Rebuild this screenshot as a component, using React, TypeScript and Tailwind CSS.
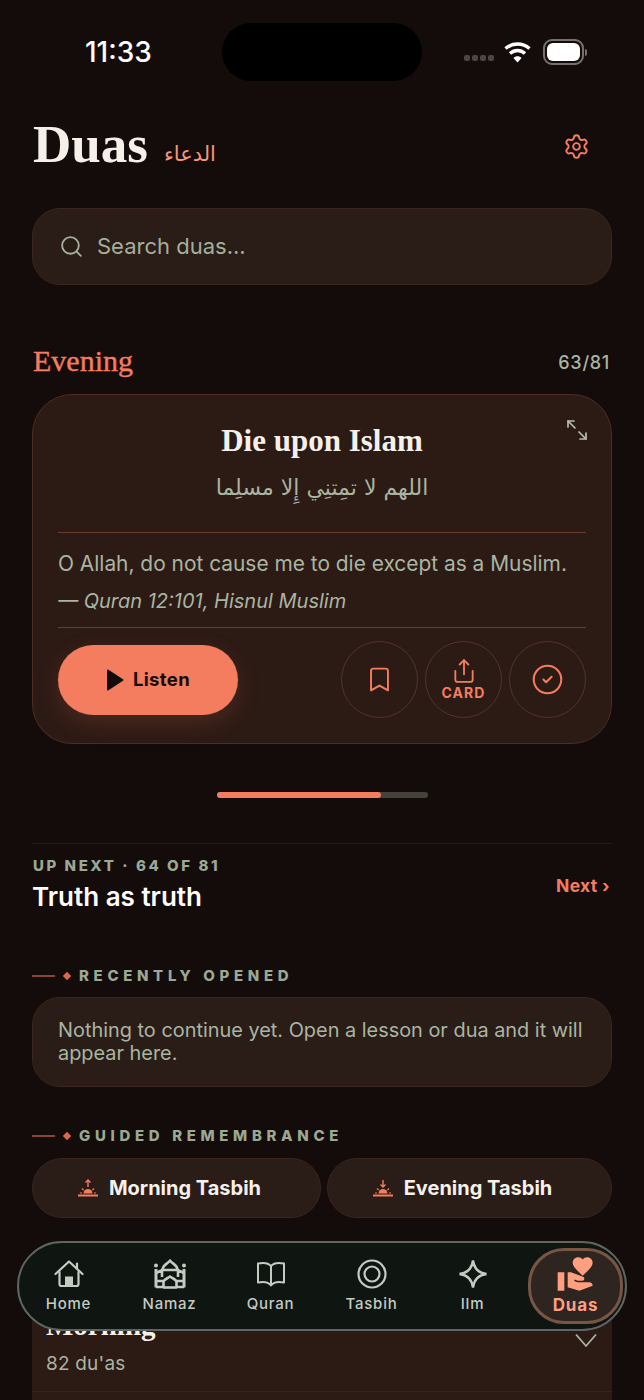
import { Bookmark, CircleCheck, Maximize2, Search, Settings, Share } from "lucide-react";
import { MdVolunteerActivism } from "react-icons/md";

const sans = "font-['Inter','Noto_Sans',sans-serif]";
const serif = "font-['Liberation_Serif','DejaVu_Serif',serif]";

function SectionLabel({ text }: { text: string }) {
  return (
    <div className="flex h-5 items-center">
      <div className="h-[2px] w-[23px] bg-[#8a4535]" />
      <div className="ml-[9px] h-[6px] w-[6px] rotate-45 bg-[#d9674c]" />
      <span className="ml-[9px] text-[15px] font-extrabold tracking-[0.31em] text-[#9aa894]">{text}</span>
    </div>
  );
}

function SunIcon({ down }: { down?: boolean }) {
  return (
    <svg width="20" height="18" viewBox="0 0 20 18" fill="#f47c5f">
      <rect x="0" y="15.500" width="20" height="2" />
      <path d="M5.500 14.500a4.500 4.500 0 0 1 9 0z" />
      <path d="M10 1v7M7.500 3.500 10 1l2.500 2.500" stroke="#f47c5f" strokeWidth="1.400" fill="none" transform={down ? "rotate(180 10 4.500)" : undefined} />
      <path d="M2 14h2M16 14h2M4 9.500l1.500 1.500M16 9.500 14.500 11" stroke="#f47c5f" strokeWidth="1.200" />
    </svg>
  );
}

function HomeIcon() {
  return (
    <svg width="30" height="28" viewBox="0 0 30 28" fill="none" stroke="#c3cbc3" strokeWidth="2.200" strokeLinejoin="round" strokeLinecap="round">
      <path d="M1.500 14 15 1.500 28.500 14" />
      <path d="M5.500 12v12a2 2 0 0 0 2 2h15a2 2 0 0 0 2-2V12" />
      <path d="M23 8V3.500" />
      <rect x="11" y="16.500" width="8" height="9.500" fill="#c3cbc3" stroke="none" />
    </svg>
  );
}

function MosqueIcon() {
  return (
    <svg width="34" height="30" viewBox="0 0 34 30" fill="none" stroke="#c3cbc3" strokeWidth="2.600" strokeLinejoin="round">
      <path d="M17 1.500c1.500 3 7.500 4 7.500 9.500h-15C9.500 5.500 15.500 4.500 17 1.500z" />
      <path d="M3 28.500V10M31 28.500V10" strokeWidth="3" />
      <circle cx="3" cy="6.500" r="2" fill="#c3cbc3" stroke="none" />
      <circle cx="31" cy="6.500" r="2" fill="#c3cbc3" stroke="none" />
      <path d="M3 14 9.500 11M31 14l-6.500-3M3 22h7M31 22h-7M9 11v7M25 11v7" />
      <path d="M3 28h7M24 28h7" />
      <path d="M10.500 28.500V23c0-2.500 4-3.500 6.500-5.500 2.500 2 6.500 3 6.500 5.500v5.500" />
      <path d="M10 28.500h14" />
    </svg>
  );
}

function BookIcon() {
  return (
    <svg width="30" height="26" viewBox="0 0 30 26" fill="none" stroke="#c3cbc3" strokeWidth="2" strokeLinejoin="round" strokeLinecap="round">
      <path d="M15 5C12.500 2 7 1.500 2 2.500v19C7 20.500 12.500 21 15 24.500c2.500-3.500 8-4 13-3v-19C23 1.500 17.500 2 15 5z" />
      <path d="M15 5v19" />
    </svg>
  );
}

function TasbihIcon() {
  return (
    <svg width="30" height="30" viewBox="0 0 30 30" fill="none" stroke="#c3cbc3" strokeWidth="2.200">
      <circle cx="15" cy="15" r="13.500" />
      <circle cx="15" cy="15" r="7.500" />
    </svg>
  );
}

function StarIcon() {
  return (
    <svg width="32" height="32" viewBox="0 0 32 32" fill="none" stroke="#c3cbc3" strokeWidth="2.400" strokeLinejoin="miter">
      <path d="M16 2.500 C17 10 21 15 29.500 16 C21 17 17 22 16 29.500 C15 22 11 17 2.500 16 C11 15 15 10 16 2.500z" />
    </svg>
  );
}

function NavItem({ label, children }: { label: string; children: React.ReactNode }) {
  return (
    <div className="flex w-[101px] flex-col items-center gap-[4px]">
      <div className="flex h-8 items-center justify-center">{children}</div>
      <span className="text-[15px] leading-5 font-medium tracking-[0.05em] text-[#c3cbc3]">{label}</span>
    </div>
  );
}

export default function App() {
  return (
    <div className={`relative h-[1400px] w-[644px] overflow-hidden bg-[#140c0a] ${sans}`}>
      {/* status bar */}
      <div className="flex h-[81px] items-end">
        <div className="flex h-[58px] w-full items-center">
          <span className="w-[222px] pl-[85px] text-[28px] font-medium text-white">11:33</span>
          <div className="h-[58px] w-[200px] rounded-[29px] bg-black" />
          <div className="flex flex-1 items-center justify-end pr-[57px]">
            <div className="mt-3 mr-[10px] flex gap-[2px]">
              <div className="h-[6px] w-[6px] rounded-[2px] bg-[#4a4644]" />
              <div className="h-[6px] w-[6px] rounded-[2px] bg-[#4a4644]" />
              <div className="h-[6px] w-[6px] rounded-[2px] bg-[#4a4644]" />
              <div className="h-[6px] w-[6px] rounded-[2px] bg-[#4a4644]" />
            </div>
            <svg width="27" height="24" viewBox="0 0 27 24" fill="none" stroke="#fff" strokeWidth="3.400">
              <path d="M1.500 8.500c7-6 17-6 24 0" />
              <path d="M6 13.500c4.500-4 10.500-4 15 0" />
              <path d="M13.500 22.500 9.500 18c2-2.200 6-2.200 8 0z" fill="#fff" stroke="none" />
            </svg>
            <div className="ml-[12px] flex items-center">
              <div className="h-[26px] w-[41px] rounded-[9px] border-2 border-[#77706d] p-[2px]">
                <div className="h-full w-full rounded-[6px] bg-white" />
              </div>
              <div className="ml-px h-[7px] w-[2px] rounded-r bg-[#77706d]" />
            </div>
          </div>
        </div>
      </div>

      <div className="px-8">
        {/* header */}
        <div className="mt-[33px] flex h-[64px] items-center justify-between">
          <div className="flex items-end">
            <h1 className={`${serif} mb-[4px] ml-px text-[53px] leading-[60px] font-bold text-[#f5f1ea]`}>Duas</h1>
            <span dir="rtl" className="mb-[8px] ml-[16px] font-['DejaVu_Sans',sans-serif] text-[21px] leading-8 text-[#f79679]">الدعاء</span>
          </div>
          <Settings size={27} strokeWidth={1.700} className="mr-[22px] text-[#f47c5f]" />
        </div>

        {/* search */}
        <div className="mt-[30px] flex h-[77px] items-center rounded-[28px] border border-[#3a261e] bg-[#2a1c17] pl-[26px]">
          <Search size={25} strokeWidth={1.800} className="text-[#a3b09c]" />
          <span className="ml-[13px] text-[22px] text-[#a3b09c]">Search duas...</span>
        </div>

        {/* current dua */}
        <div className="mt-[58px] flex h-[38px] items-center justify-between">
          <span className={`${serif} mb-[3px] ml-px text-[30px] text-[#f47c5f] [-webkit-text-stroke:0.4px_#f47c5f]`}>Evening</span>
          <span className="mr-[2px] text-[18px] font-medium tracking-[0.04em] text-[#a9b5a2]">63/81</span>
        </div>
        <div className="relative mt-[13px] h-[350px] rounded-[40px] border border-[#4d2d22] bg-[#2c1a14] px-[25px]">
          <Maximize2 size={24} strokeWidth={1.700} className="absolute top-[23px] right-[22px] rotate-90 text-[#b3bead]" />
          <div className={`${serif} mt-[27px] text-center text-[31px] leading-[38px] font-bold text-[#f5f1ea]`}>Die upon Islam</div>
          <div dir="rtl" className="mt-[6px] text-center font-['DejaVu_Sans',sans-serif] text-[22px] leading-[44px] text-[#a9b5a2]">اللهم لا تمِتنِي إِلا مسلِما</div>
          <div className="mt-[22px] border-t border-[#6a3a2c] pt-[17px]">
            <p className="text-[20.900px] leading-[28px] text-[#a9b5a2]">O Allah, do not cause me to die except as a Muslim.</p>
            <p className="mt-[9px] text-[20px] leading-[28px] italic text-[#a9b5a2]">— Quran 12:101, Hisnul Muslim</p>
          </div>
          <div className="mt-[12px] flex items-center justify-between border-t border-[#6a3a2c] pt-[13px]">
            <div className="flex h-[70px] w-[180px] items-center justify-center gap-[9px] rounded-[35px] bg-[#f47c5f] shadow-[0_8px_24px_rgba(244,124,95,0.16)]">
              <svg width="18" height="22" viewBox="0 0 18 22" fill="#140c0a">
                <path d="M1 1.500a1 1 0 0 1 1.500-.800l14.500 9.500a1 1 0 0 1 0 1.600L2.500 21.300A1 1 0 0 1 1 20.500z" />
              </svg>
              <span className="text-[18.500px] font-bold tracking-[0.02em] text-[#140c0a]">Listen</span>
            </div>
            <div className="flex gap-[7px]">
              <div className="flex h-[77px] w-[77px] items-center justify-center rounded-full border border-[#56332a]">
                <Bookmark size={29} strokeWidth={1.600} className="text-[#f47c5f]" />
              </div>
              <div className="flex h-[77px] w-[77px] flex-col items-center justify-center rounded-full border border-[#56332a]">
                <Share size={26} strokeWidth={1.700} className="text-[#f47c5f]" />
                <span className="mt-[1px] text-[14px] leading-4 font-bold tracking-[0.08em] text-[#f47c5f]">CARD</span>
              </div>
              <div className="flex h-[77px] w-[77px] items-center justify-center rounded-full border border-[#56332a]">
                <CircleCheck size={33} strokeWidth={1.500} className="text-[#f47c5f]" />
              </div>
            </div>
          </div>
        </div>

        {/* pager */}
        <div className="mx-auto mt-[48px] h-[6px] w-[211px] rounded-full bg-[#45423a]">
          <div className="h-full w-[164px] rounded-full bg-[#f47c5f]" />
        </div>

        {/* up next */}
        <div className="mt-[45px] flex items-center justify-between border-t border-[#241a16] pt-[12px]">
          <div>
            <div className="ml-px text-[15px] leading-5 font-extrabold tracking-[0.17em] text-[#9aa894]">UP NEXT · 64 OF 81</div>
            <div className="mt-[5px] text-[26px] leading-8 font-semibold text-white">Truth as truth</div>
          </div>
          <span className="mt-[4px] mr-[2px] text-[17.500px] font-bold tracking-[0.02em] text-[#f47c5f]">Next ›</span>
        </div>

        {/* recently opened */}
        <div className="mt-[53px]">
          <SectionLabel text="RECENTLY OPENED" />
        </div>
        <div className="mt-[11px] flex h-[90px] items-center rounded-[28px] border border-[#3a261e] bg-[#2a1c17] px-[25px]">
          <p className="text-[19.900px] leading-[23px] text-[#a9b5a2]">Nothing to continue yet. Open a lesson or dua and it will appear here.</p>
        </div>

        {/* guided */}
        <div className="mt-[39px]">
          <SectionLabel text="GUIDED REMEMBRANCE" />
        </div>
        <div className="mt-[12px] flex gap-[6px]">
          <div className="flex h-[60px] w-[289px] items-center justify-center gap-[11px] rounded-[30px] border border-[#3a261e] bg-[#2a1c17] pr-[14px]">
            <SunIcon />
            <span className="text-[20px] font-bold text-[#f5f1ea]">Morning Tasbih</span>
          </div>
          <div className="flex h-[60px] flex-1 items-center justify-center gap-[11px] rounded-[30px] border border-[#3a261e] bg-[#2a1c17] pr-[14px]">
            <SunIcon down />
            <span className="text-[20px] font-bold text-[#f5f1ea]">Evening Tasbih</span>
          </div>
        </div>

        {/* category list, mostly under the tab bar */}
        <div className="mt-[38px] h-[200px] bg-[#2c1a14]">
          <div className="flex h-[136px] items-end justify-between border-b border-[#3a2018] pr-[15px] pl-[14px]">
            <div>
              <div className={`${serif} text-[29px] leading-9 font-bold text-[#f5f1ea]`}>Morning</div>
              <div className="mt-[7px] mb-[13px] text-[19px] leading-7 tracking-[0.01em] text-[#a9b5a2]">82 du'as</div>
            </div>
            <svg width="22" height="15" viewBox="0 0 22 15" fill="none" stroke="#a9b5a2" strokeWidth="1.800" className="mb-[43px]">
              <path d="M1 1.500 11 13 21 1.500" />
            </svg>
          </div>
        </div>
      </div>

      {/* tab bar */}
      <div className="absolute top-[1241px] left-[17px] flex h-[90px] w-[610px] items-center rounded-[45px] border-2 border-[#5d6660] bg-[#0f1511]">
        <div className="-ml-px flex">
          <NavItem label="Home"><HomeIcon /></NavItem>
          <NavItem label="Namaz"><MosqueIcon /></NavItem>
          <NavItem label="Quran"><BookIcon /></NavItem>
          <NavItem label="Tasbih"><TasbihIcon /></NavItem>
          <NavItem label="Ilm"><StarIcon /></NavItem>
        </div>
        <div className="ml-[5px] flex h-[76px] w-[95px] flex-col items-center justify-center rounded-[36px] border-[3px] border-[#7a5545] bg-[#2e2420]">
          <MdVolunteerActivism size={40} className="-mt-[4px] text-[#ff9f80]" />
          <span className="mt-px text-[17px] leading-5 font-bold tracking-[0.05em] text-[#ff9f80]">Duas</span>
        </div>
      </div>
    </div>
  );
}
